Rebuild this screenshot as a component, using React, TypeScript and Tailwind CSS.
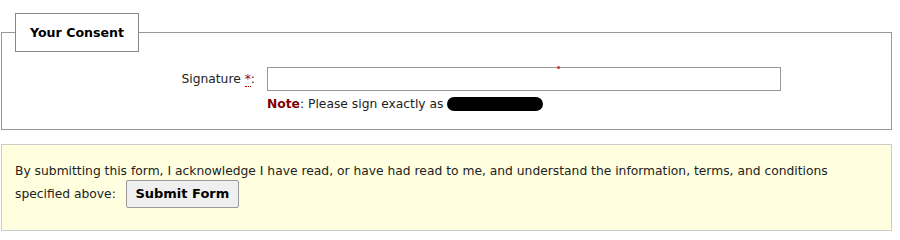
import React from "react";

export default function App() {
  const font = { fontFamily: '"DejaVu Sans", Verdana, sans-serif' };
  return (
    <div
      className="w-[900px] h-[235px] bg-white text-[12.3px] leading-[18px] text-[#222]"
      style={font}
    >
      <div className="pl-[1px] pr-[8px]">
        <fieldset className="relative mt-[13px] border border-[#999] px-[13px] pb-[16px] pt-[0px]">
          <legend className="border border-[#888] bg-white px-[14px] py-[10px] text-[12.6px] font-bold leading-[17px] text-black">
            Your Consent
          </legend>
          <div className="mt-[15px] flex items-center">
            <label className="w-[240px] shrink-0 text-right">
              Signature{" "}
              <abbr
                title="required"
                className="text-[#a00] no-underline border-b border-dotted border-[#a00]"
              >
                *
              </abbr>
              :
            </label>
            <input
              type="text"
              className="ml-[12px] h-[24px] w-[514px] border border-[#999] bg-white outline-none"
            />
          </div>
          <div className="ml-[252px] mt-[4px] flex items-center">
            <span className="font-bold text-[#800000]">Note</span>
            <span>: Please sign exactly as</span>
            <span className="ml-[4px] inline-block h-[14px] w-[96px] rounded-full bg-black" />
          </div>
          <span className="absolute left-[555px] top-[14px] h-[3px] w-[3px] rounded-full bg-[#c33]" />
        </fieldset>
        <div className="mt-[14px] border border-[#ccc] bg-[#ffffe0] px-[13px] pt-[17px] pb-[22px]">
          <div>
            By submitting this form, I acknowledge I have read, or have had read to me, and understand the information, terms, and conditions
          </div>
          <div className="flex items-center">
            <span>specified above:</span>
            <button className="ml-[10px] h-[28px] w-[113px] rounded-[2px] border border-[#999] bg-[#efefef] text-[13px] font-bold text-black">
              Submit Form
            </button>
          </div>
        </div>
      </div>
    </div>
  );
}
